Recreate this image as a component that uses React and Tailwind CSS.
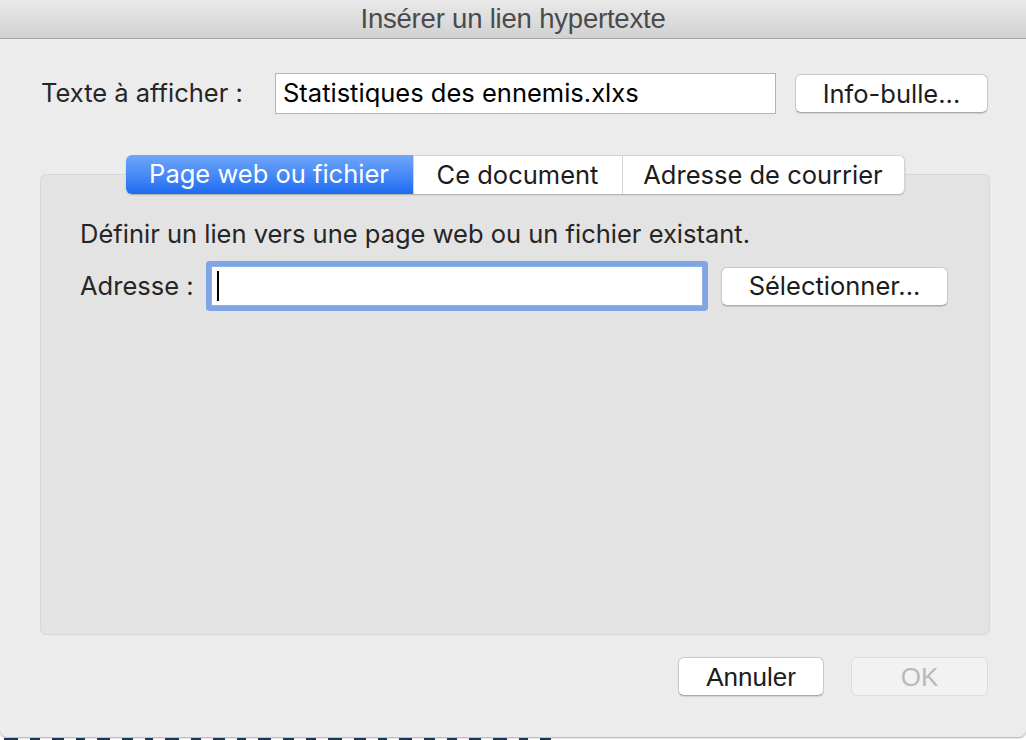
const tabs = [
  { id: 1, label: "Page web ou fichier", active: true, w: "w-[287px]" },
  { id: 2, label: "Ce document", active: false, w: "w-[209px]" },
  { id: 3, label: "Adresse de courrier", active: false, w: "w-[283px]" },
];

// bits of the worksheet title peeking out under the dialog
const peeks = [
  "w-[14px]", "w-[10px]", "w-[12px]", "w-[9px]", "w-[13px]", "w-[11px]", "w-[8px]", "w-[14px]",
  "w-[10px]", "w-[12px]", "w-[9px]", "w-[13px]", "w-[11px]", "w-[10px]", "w-[14px]", "w-[12px]",
  "w-[9px]", "w-[13px]", "w-[11px]", "w-[10px]", "w-[12px]", "w-[14px]", "w-[9px]", "w-[11px]",
];

const MacButton = ({ label, customStyle = "", disabled = false }) => (
  <button
    className={`h-[39px] rounded-[6px] border text-[25.5px] leading-none flex items-center justify-center ${
      disabled
        ? "bg-[#f2f2f2] border-[#dcdcdc] text-[#b9b9b9]"
        : "bg-white border-[#c9c9c9] border-b-[#a9a9a9] text-[#1c1c1c] shadow-[0_1px_1px_rgba(0,0,0,0.12)]"
    } ${customStyle}`}
  >
    {label}
  </button>
);

export default function App() {
  return (
    <div className="w-[1026px] h-[740px] bg-white overflow-hidden flex flex-col font-['Inter',sans-serif]">
      <div className="h-[737px] shrink-0 bg-[#ececec] rounded-b-[7px] shadow-[0_1px_2px_rgba(0,0,0,0.35)] flex flex-col">
        {/* title bar */}
        <div className="h-[39px] shrink-0 bg-gradient-to-b from-[#e9e9e9] to-[#d1d1d1] border-b border-[#a7a7a7] flex items-center justify-center">
          <span className="text-[27.5px] text-[#4b4b4b] font-['Liberation_Sans',sans-serif] tracking-[-0.2px]">
            Insérer un lien hypertexte
          </span>
        </div>

        {/* texte a afficher */}
        <div className="flex items-center mt-[34px] pl-[41px] h-[41px]">
          <span className="w-[234px] text-[25.5px] text-[#262626]">Texte à afficher :</span>
          <div className="w-[501px] h-[41px] bg-white border border-[#b4b4b4] flex items-center pl-[7px]">
            <span className="text-[25.5px] text-black">Statistiques des ennemis.xlxs</span>
          </div>
          <MacButton label="Info-bulle..." customStyle="ml-[19px] w-[193px]" />
        </div>

        {/* tabs + panel */}
        <div className="mt-[41px] ml-[40px] mr-[36px] flex flex-col">
          <div className="relative z-10 flex self-center h-[39px] rounded-[6px] shadow-[0_1px_1.5px_rgba(0,0,0,0.25)]">
            {tabs.map((tab, i) => (
              <div
                key={tab.id}
                className={`${tab.w} h-full flex items-center justify-center text-[25.5px] ${
                  tab.active
                    ? "bg-gradient-to-b from-[#6fa6f8] to-[#1c6bf2] text-white rounded-l-[6px]"
                    : `bg-white text-[#1c1c1c] border-t border-[#d4d4d4] ${i > 0 ? "border-l" : ""} ${
                        i === tabs.length - 1 ? "rounded-r-[6px] border-r" : ""
                      }`
                }`}
              >
                {tab.label}
              </div>
            ))}
          </div>
          <div className="-mt-[20px] h-[461px] bg-[#e3e3e3] border border-[#d8d8d8] rounded-[6px] pt-[44px] pl-[39px]">
            <p className="text-[25.5px] leading-[30px] text-[#262626]">
              Définir un lien vers une page web ou un fichier existant.
            </p>
            <div className="flex items-center mt-[17px]">
              <span className="w-[131px] text-[25.5px] text-[#262626]">Adresse :</span>
              <div className="w-[492px] h-[40px] bg-white border border-[#8fb0e8] shadow-[0_0_0_5px_#7fa5e5] rounded-[1px] flex items-center pl-[5px]">
                <span className="w-[2px] h-[30px] bg-black" />
              </div>
              <MacButton label="Sélectionner..." customStyle="ml-[18px] w-[227px]" />
            </div>
          </div>
        </div>

        {/* footer buttons */}
        <div className="flex justify-end gap-[27px] mt-[22px] pr-[38px]">
          <MacButton label="Annuler" customStyle="w-[146px] font-['Liberation_Sans',sans-serif] text-[26px]" />
          <MacButton label="OK" disabled customStyle="w-[137px] font-['Liberation_Sans',sans-serif] text-[26px]" />
        </div>
      </div>

      {/* document behind the dialog */}
      <div className="h-[3px] flex gap-[12px] pl-[4px] pt-[1px]">
        {peeks.map((w, i) => (
          <span key={i} className={`${w} h-[2px] bg-[#1f3558]`} />
        ))}
      </div>
    </div>
  );
}
